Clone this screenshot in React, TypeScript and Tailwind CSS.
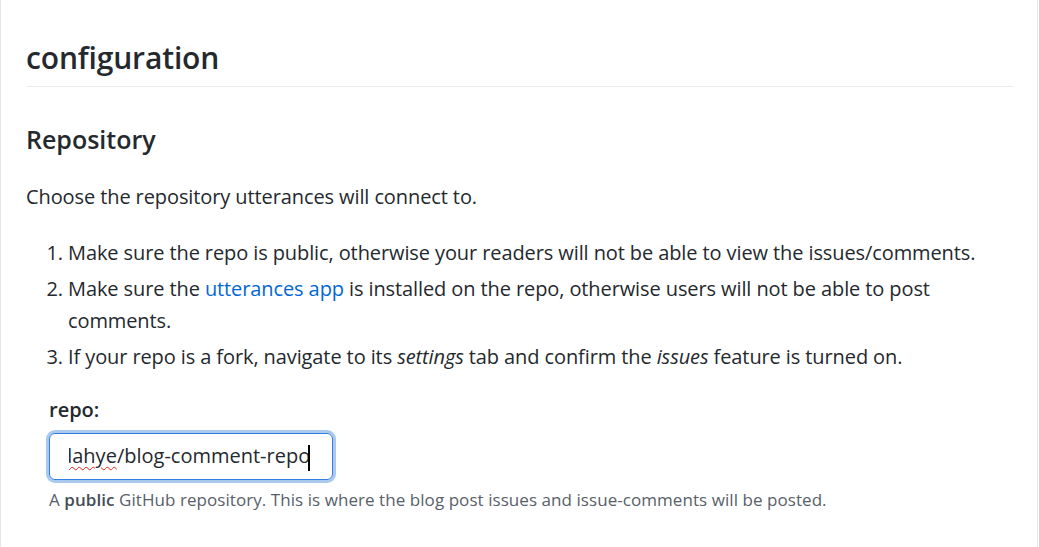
import React from 'react';

const App: React.FC = () => {
  return (
    <div
      className="w-[1038px] min-h-[547px] bg-white border-l border-r border-[#e1e4e8] pl-[25px] pr-[24px] text-[#24292e]"
      style={{ fontFamily: '"Open Sans", "Noto Sans", sans-serif' }}
    >
      {/* Heading */}
      <h2 className="pt-[39px] text-[30px] leading-[37px] font-semibold tracking-[-0.15px] pb-[10px] border-b border-[#eaecef]">
        configuration
      </h2>

      <h3 className="mt-[37px] text-[25px] leading-[31px] font-semibold">Repository</h3>

      <p className="mt-[26px] text-[20px] leading-[32px] tracking-[-0.1px]">
        Choose the repository utterances will connect to.
      </p>

      <ol className="mt-[24px] list-decimal pl-[42px] text-[20px] leading-[32px] tracking-[-0.1px] space-y-[4px]">
        <li>Make sure the repo is public, otherwise your readers will not be able to view the issues/comments.</li>
        <li>
          Make sure the{' '}
          <a href="#" className="text-[#0366d6]">
            utterances app
          </a>{' '}
          is installed on the repo, otherwise users will not be able to post comments.
        </li>
        <li>
          If your repo is a fork, navigate to its <em>settings</em> tab and confirm the <em>issues</em> feature is
          turned on.
        </li>
      </ol>

      {/* Repo field */}
      <fieldset className="mt-[21px] pl-[23px]">
        <label className="block text-[20px] leading-[32px] font-semibold">repo:</label>
        <div className="mt-[7px] w-[284px] h-[47px] rounded-[6px] border border-[#2f7ee0] ring-[3px] ring-[#a9c9ef] flex items-center pl-[19px] pr-[14px]">
          <div className="overflow-hidden whitespace-nowrap text-[20px] leading-[28px]">
            <span className="inline-block -ml-[9px]">
              <span className="underline decoration-wavy decoration-[#e0201a] decoration-1 underline-offset-[3px]">
                dahye
              </span>
              /blog-comment-repo
            </span>
            <span className="inline-block align-middle w-[2px] h-[26px] bg-black -ml-[2px]" />
          </div>
        </div>
        <p className="mt-[9px] text-[17px] leading-[22px] tracking-[0.06px] text-[#586069]">
          A <strong className="font-semibold text-[#444d56]">public</strong> GitHub repository. This is where the blog
          post issues and issue-comments will be posted.
        </p>
      </fieldset>
    </div>
  );
};

export default App;
